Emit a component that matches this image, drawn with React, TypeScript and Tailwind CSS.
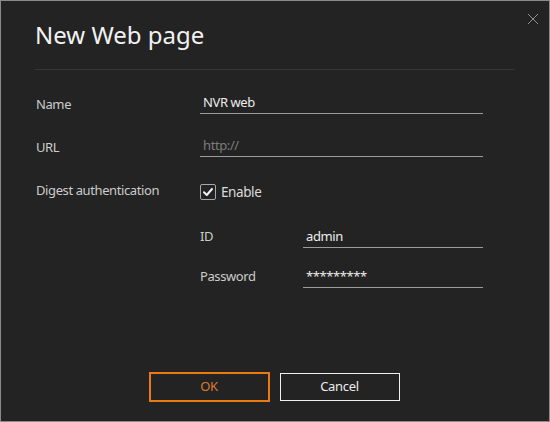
import type { ReactNode } from 'react';

const font = { fontFamily: '"Noto Sans", "Open Sans", sans-serif' };

function Field({ value, placeholder, width }: { value?: string; placeholder?: string; width: string }) {
  return (
    <div className={`${width} h-[22px] border-b border-[#9c9c9c] pl-[3px] text-[13px] leading-[20px] tracking-[-0.4px]`}>
      {value ? (
        <span className="text-[#ececec]">{value}</span>
      ) : (
        <span className="text-[#7c7c7c]">{placeholder}</span>
      )}
    </div>
  );
}

function Label({ children, className = '' }: { children: ReactNode; className?: string }) {
  return <div className={`text-[13px] leading-[20px] tracking-[-0.4px] text-[#cccccc] ${className}`}>{children}</div>;
}

export default function App() {
  return (
    <div
      className="relative flex h-[422px] w-[550px] flex-col border border-[#8a8a8a] bg-[#232323]"
      style={font}
    >
      <button type="button" className="absolute right-[10px] top-[12px] p-0 text-[#8f8f8f]">
        <svg width="12" height="12" viewBox="0 0 12 12" fill="none" stroke="currentColor" strokeWidth="1">
          <path d="M1 1 L11 11 M11 1 L1 11" />
        </svg>
      </button>

      <h1 className="ml-[34px] mt-[18px] text-[24px] leading-[32px] font-normal text-[#f2f2f2]">New Web page</h1>
      <div className="ml-[34px] mt-[18px] h-px w-[480px] bg-[#363636]" />

      <div className="ml-[35px] flex flex-col">
        {/* Name */}
        <div className="mt-[22px] flex items-start">
          <Label className="mt-[2px] w-[164px]">Name</Label>
          <Field value="NVR web" width="w-[283px]" />
        </div>

        {/* URL */}
        <div className="mt-[21px] flex items-start">
          <Label className="mt-[2px] w-[164px]">URL</Label>
          <Field placeholder="http://" width="w-[283px]" />
        </div>

        {/* Digest authentication */}
        <div className="mt-[23px] flex items-start">
          <Label className="w-[164px]">Digest authentication</Label>
          <label className="mt-[2px] flex h-[20px] items-center gap-[5px]">
            <span className="flex h-[16px] w-[16px] items-center justify-center rounded-[2px] border border-[#a8a8a8]">
              <svg width="12" height="12" viewBox="0 0 12 12" fill="none" stroke="#f2f2f2" strokeWidth="2" strokeLinecap="round" strokeLinejoin="round">
                <path d="M2 6.3 L4.8 9 L10 3" />
              </svg>
            </span>
            <span className="text-[13.5px] leading-[20px] tracking-[-0.4px] text-[#dcdcdc]">Enable</span>
          </label>
        </div>

        {/* ID */}
        <div className="ml-[164px] mt-[24px] flex items-start">
          <Label className="w-[103px]">ID</Label>
          <Field value="admin" width="w-[180px]" />
        </div>

        {/* Password */}
        <div className="ml-[164px] mt-[18px] flex items-start">
          <Label className="w-[103px]">Password</Label>
          <Field value="*********" width="w-[180px]" />
        </div>
      </div>

      <div className="mt-auto flex items-center justify-center gap-[10px] pb-[19px] pr-[2px]">
        <button
          type="button"
          className="h-[30px] w-[121px] border-2 border-[#ec7a12] text-[13px] tracking-[-0.3px] text-[#dd7a2c]"
        >
          OK
        </button>
        <button
          type="button"
          className="h-[28px] w-[120px] border border-[#f0f0f0] text-[13px] tracking-[-0.3px] text-[#ececec]"
        >
          Cancel
        </button>
      </div>
    </div>
  );
}
